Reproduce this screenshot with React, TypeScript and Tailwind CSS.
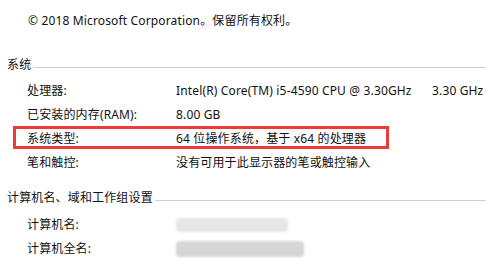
import React from 'react';

const font = "font-['Noto_Sans','Noto_Sans_CJK_SC',sans-serif]";

const Row: React.FC<{ label: string; children?: React.ReactNode; className?: string }> = ({ label, children, className }) => (
  <div className={`relative flex items-center h-6 pl-[27px] ${className ?? ''}`}>
    <div className="w-[149px] shrink-0">{label}</div>
    <div className="flex items-center">{children}</div>
  </div>
);

const SectionHeader: React.FC<{ title: string; className?: string }> = ({ title, className }) => (
  <div className={`flex items-center h-6 pl-[7px] ${className ?? ''}`}>
    <span className="whitespace-nowrap">{title}</span>
    <div className="flex-1 h-px bg-[#d0d0d0] mt-1 ml-[2px]" />
  </div>
);

const App: React.FC = () => {
  return (
    <div className={`w-[486px] h-[265px] overflow-hidden bg-white text-[12px] tracking-[0.15px] text-[#111] ${font}`}>
      {/* edition line, cut off at the top */}
      <div className="h-6 -mt-[17px] pl-[28px] flex items-center">Windows 10 专业版</div>
      <div className="h-[27px] pl-[28px] flex items-center">© 2018 Microsoft Corporation。保留所有权利。</div>

      <SectionHeader title="系统" className="mt-[19px]" />
      <div className="mt-[2px]">
        <Row label="处理器:">
          <span className="w-[256px]">Intel(R) Core(TM) i5-4590 CPU @ 3.30GHz</span>
          <span>3.30 GHz</span>
        </Row>
        <Row label="已安装的内存(RAM):">8.00 GB</Row>
        <Row label="系统类型:">
          64 位操作系统，基于 x64 的处理器
          {/* annotation box */}
          <div className="absolute left-[13px] top-[-1px] w-[376px] h-[23px] border-[3px] border-[#f03a3a]" />
        </Row>
        <Row label="笔和触控:">没有可用于此显示器的笔或触控输入</Row>
      </div>

      <SectionHeader title="计算机名、域和工作组设置" className="mt-[11px]" />
      <div className="mt-[3px]">
        <Row label="计算机名:">
          <div className="w-[112px] h-[14px] bg-[#e6e6e6] rounded-sm blur-[1px]" />
        </Row>
        <Row label="计算机全名:">
          <div className="w-[128px] h-[16px] bg-[#d6d6d6] rounded-sm blur-[1px]" />
        </Row>
      </div>
    </div>
  );
};

export default App;
